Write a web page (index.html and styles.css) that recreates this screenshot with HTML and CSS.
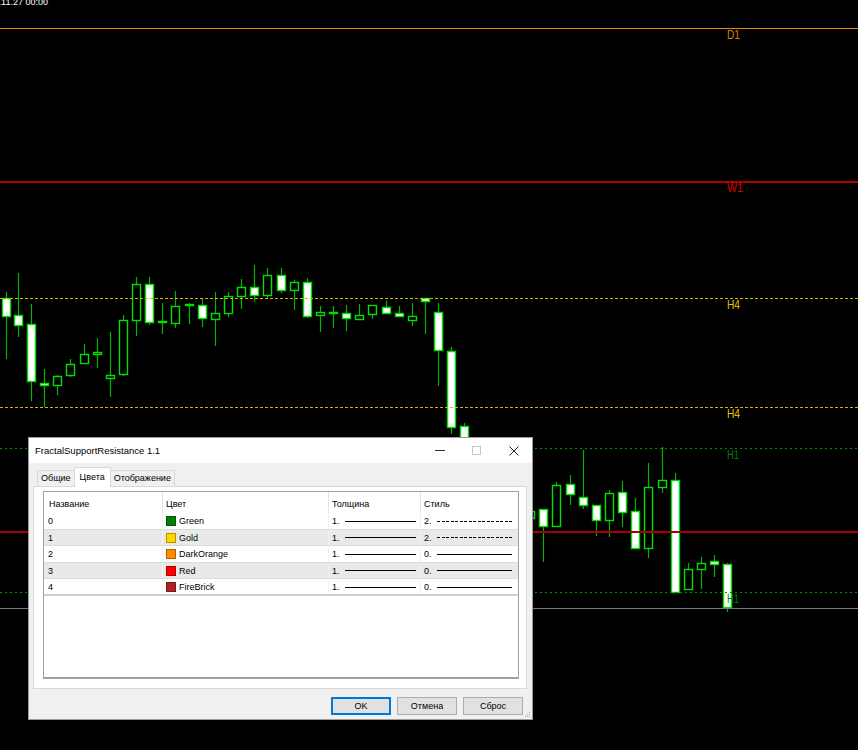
FILE: index.html
```html
<!DOCTYPE html>
<html>
<head>
<title>FractalSupportResistance</title>
<link rel="stylesheet" href="styles.css">
</head>
<body>

  <div class="screen">
    <svg class="chart" id="chart" width="858" height="750">
      <text class="date" x="48" y="5" text-anchor="end">2024.11.27 00:00</text>
      <g id="candles"></g>
      <line class="lvl d1" x1="0" y1="28.5" x2="858" y2="28.5"/>
      <line class="lvl w1" x1="0" y1="181.5" x2="858" y2="181.5"/>
      <line class="lvl h4" x1="0" y1="298.5" x2="858" y2="298.5"/>
      <line class="lvl h4" x1="0" y1="407.5" x2="858" y2="407.5"/>
      <line class="lvl h1" x1="0" y1="448.5" x2="858" y2="448.5"/>
      <line class="lvl mn" x1="0" y1="531.5" x2="858" y2="531.5"/>
      <line class="lvl h1" x1="0" y1="592.5" x2="858" y2="592.5"/>
      <line class="lvl bid" x1="0" y1="608.5" x2="858" y2="608.5"/>
      <text class="lbl d1" x="727" y="39" textLength="13" lengthAdjust="spacingAndGlyphs">D1</text>
      <text class="lbl w1" x="727" y="192" textLength="16" lengthAdjust="spacingAndGlyphs">W1</text>
      <text class="lbl h4" x="727" y="309" textLength="13" lengthAdjust="spacingAndGlyphs">H4</text>
      <text class="lbl h4" x="727" y="418" textLength="13" lengthAdjust="spacingAndGlyphs">H4</text>
      <text class="lbl h1" x="727" y="459" textLength="12" lengthAdjust="spacingAndGlyphs">H1</text>
      <text class="lbl h1" x="727" y="603" textLength="12" lengthAdjust="spacingAndGlyphs">H1</text>
    </svg>

    <div class="dialog">
      <div class="titlebar">
        <span class="title">FractalSupportResistance 1.1</span>
        <span class="cap-btn">
          <svg width="10" height="1"><rect width="10" height="1" fill="#333"/></svg>
        </span>
        <span class="cap-btn">
          <svg width="9" height="9"><rect x="0.5" y="0.5" width="8" height="8" fill="none" stroke="#c6c6c6"/></svg>
        </span>
        <span class="cap-btn">
          <svg width="10" height="10"><path d="M0.5 0.5L9.5 9.5M9.5 0.5L0.5 9.5" stroke="#222" fill="none"/></svg>
        </span>
      </div>

      <div class="dialog-body">
        <div class="tabs">
          <span class="tab">Общие</span>
          <span class="tab active">Цвета</span>
          <span class="tab">Отображение</span>
        </div>

        <div class="tab-page">
          <div class="list">
            <div class="row head">
              <div class="cell">Название</div>
              <div class="cell">Цвет</div>
              <div class="cell">Толщина</div>
              <div class="cell">Стиль</div>
            </div>
            <div class="row">
              <div class="cell">0</div>
              <div class="cell"><span class="swatch" style="background: #008000;"></span>Green</div>
              <div class="cell">1.<span class="stroke"></span></div>
              <div class="cell">2.<span class="stroke dash"></span></div>
            </div>
            <div class="row alt">
              <div class="cell">1</div>
              <div class="cell"><span class="swatch" style="background: #ffd700;"></span>Gold</div>
              <div class="cell">1.<span class="stroke"></span></div>
              <div class="cell">2.<span class="stroke dash"></span></div>
            </div>
            <div class="row">
              <div class="cell">2</div>
              <div class="cell"><span class="swatch" style="background: #ff8c00;"></span>DarkOrange</div>
              <div class="cell">1.<span class="stroke"></span></div>
              <div class="cell">0.<span class="stroke"></span></div>
            </div>
            <div class="row alt">
              <div class="cell">3</div>
              <div class="cell"><span class="swatch" style="background: #ff0000;"></span>Red</div>
              <div class="cell">1.<span class="stroke"></span></div>
              <div class="cell">0.<span class="stroke"></span></div>
            </div>
            <div class="row last">
              <div class="cell">4</div>
              <div class="cell"><span class="swatch" style="background: #b22222;"></span>FireBrick</div>
              <div class="cell">1.<span class="stroke"></span></div>
              <div class="cell">0.<span class="stroke"></span></div>
            </div>
          </div>
        </div>

        <div class="buttons">
          <button class="btn default">OK</button>
          <button class="btn">Отмена</button>
          <button class="btn">Сброс</button>
        </div>

        <svg class="grip" width="7" height="7">
          <rect x="5" y="1" width="1" height="1"/>
          <rect x="3" y="3" width="1" height="1"/>
          <rect x="5" y="3" width="1" height="1"/>
          <rect x="1" y="5" width="1" height="1"/>
          <rect x="3" y="5" width="1" height="1"/>
          <rect x="5" y="5" width="1" height="1"/>
        </svg>
      </div>
    </div>
  </div>

  <script>
    // [left, wickTop, wickBottom, bodyTop, bodyBottom, kind]  w = white, h = hollow, d = doji
    const candles = [
      [2, 292, 359, 298, 317, 'w'],
      [14, 273, 337, 315, 326, 'w'],
      [27, 304, 401, 324, 382, 'w'],
      [40, 369, 407, 383, 386, 'w'],
      [53, 375, 395, 376, 386, 'h'],
      [66, 359, 377, 364, 376, 'h'],
      [80, 344, 364, 354, 364, 'h'],
      [93, 338, 368, 352, 355, 'h'],
      [106, 332, 397, 375, 379, 'h'],
      [119, 315, 376, 320, 375, 'h'],
      [132, 277, 336, 284, 321, 'h'],
      [145, 277, 325, 284, 323, 'w'],
      [158, 303, 334, 321, 323, 'd'],
      [171, 291, 328, 306, 324, 'h'],
      [185, 303, 324, 304, 306, 'd'],
      [198, 298, 327, 305, 319, 'w'],
      [211, 292, 346, 313, 320, 'h'],
      [224, 292, 317, 296, 314, 'h'],
      [237, 279, 309, 287, 297, 'h'],
      [250, 265, 302, 287, 296, 'w'],
      [263, 268, 298, 275, 296, 'h'],
      [277, 268, 293, 275, 291, 'w'],
      [290, 280, 310, 282, 291, 'h'],
      [303, 278, 318, 282, 317, 'w'],
      [316, 306, 332, 312, 316, 'h'],
      [329, 306, 328, 312, 314, 'd'],
      [342, 305, 331, 313, 319, 'w'],
      [355, 304, 320, 315, 320, 'h'],
      [368, 305, 319, 305, 315, 'h'],
      [382, 301, 314, 307, 314, 'w'],
      [395, 306, 317, 313, 317, 'w'],
      [408, 303, 326, 316, 321, 'h'],
      [421, 298, 334, 298, 302, 'w'],
      [434, 303, 386, 312, 351, 'w'],
      [447, 347, 434, 351, 428, 'w'],
      [460, 423, 445, 426, 445, 'w'],
      [526, 505, 525, 511, 519, 'h'],
      [539, 509, 562, 509, 527, 'w'],
      [552, 482, 527, 485, 527, 'h'],
      [566, 475, 505, 484, 495, 'w'],
      [579, 450, 509, 497, 506, 'w'],
      [592, 505, 536, 505, 521, 'w'],
      [605, 490, 537, 493, 521, 'h'],
      [618, 481, 527, 492, 513, 'w'],
      [631, 498, 549, 511, 549, 'w'],
      [644, 463, 558, 487, 549, 'h'],
      [658, 447, 493, 480, 488, 'h'],
      [671, 473, 593, 480, 593, 'w'],
      [684, 563, 590, 569, 590, 'h'],
      [697, 557, 589, 563, 570, 'h'],
      [710, 555, 577, 561, 565, 'w'],
      [723, 563, 612, 564, 608, 'w']
    ];

    const ns = 'http://www.w3.org/2000/svg';
    const group = document.getElementById('candles');

    candles.forEach(([left, wTop, wBot, bTop, bBot, kind]) => {
      const wick = document.createElementNS(ns, 'line');
      wick.setAttribute('x1', left + 4.5);
      wick.setAttribute('x2', left + 4.5);
      wick.setAttribute('y1', wTop);
      wick.setAttribute('y2', wBot);
      wick.setAttribute('class', 'wick');
      group.appendChild(wick);

      const body = document.createElementNS(ns, 'rect');
      body.setAttribute('x', left + 0.5);
      body.setAttribute('y', bTop + 0.5);
      body.setAttribute('width', 8);
      body.setAttribute('height', Math.max(bBot - bTop - 1, 1));
      body.setAttribute('class', 'body ' + kind);
      group.appendChild(body);
    });
  </script>

</body>
</html>
```

FILE: styles.css
```css
body {
  margin: 0;
  background: #000;
  font-family: "Liberation Sans", Arial, sans-serif;
}

.screen {
  position: relative;
  width: 858px;
  height: 750px;
  overflow: hidden;
  background: #000;
}

.chart {
  display: block;
}

/* chart */
.date {
  fill: #fff;
  font-size: 9px;
}

.wick {
  stroke: #00b400;
  stroke-width: 1.2;
}

.body {
  stroke: #00e000;
  stroke-width: 1.4;
}

.body.w {
  fill: #fff;
}

.body.h {
  fill: #000;
}

.body.d {
  fill: #00e000;
}

.lvl {
  stroke-width: 1;
  shape-rendering: crispEdges;
}

.lvl.d1 { stroke: #f08000; }
.lvl.w1 { stroke: #b00000; stroke-width: 2; }
.lvl.mn { stroke: #a80000; stroke-width: 2; }
.lvl.h4 { stroke: #d8b400; stroke-dasharray: 3 2; }
.lvl.h1 { stroke: #009000; stroke-dasharray: 2 3; }
.lvl.bid { stroke: #707a88; }

.lbl {
  font-size: 12.5px;
}

.lbl.d1 { fill: #d98000; }
.lbl.w1 { fill: #d80000; }
.lbl.h4 { fill: #e0c000; }
.lbl.h1 { fill: #008000; }

/* dialog */
.dialog {
  position: absolute;
  left: 28px;
  top: 437px;
  width: 503px;
  border: 1px solid #9b9b9b;
  background: #f0f0f0;
  font-size: 9px;
  color: #000;
}

.titlebar {
  display: flex;
  align-items: center;
  height: 25px;
  background: #fff;
}

.title {
  flex: 1;
  padding-left: 6px;
  font-size: 9.5px;
}

.cap-btn {
  width: 37px;
  height: 25px;
  display: flex;
  align-items: center;
  justify-content: center;
}

.dialog-body {
  position: relative;
  padding: 4px 5px 4px 4px;
}

.tabs {
  position: relative;
  z-index: 1;
  display: flex;
  align-items: flex-end;
  height: 19px;
  padding-left: 4px;
}

.tab {
  height: 15px;
  line-height: 15px;
  padding: 0 3px;
  border: 1px solid #d9d9d9;
  border-bottom: none;
  background: #f0f0f0;
  margin-right: -1px;
}

.tab.active {
  height: 19px;
  line-height: 18px;
  padding: 0 5px;
  background: #fff;
  margin-bottom: -1px;
}

.tab-page {
  box-sizing: border-box;
  height: 203px;
  padding: 4px 7px 0 9px;
  background: #fff;
  border: 1px solid #d9d9d9;
}

.list {
  box-sizing: border-box;
  height: 188px;
  border: 1px solid #a0a0a0;
  border-bottom-width: 2px;
  background: #fff;
}

.row {
  box-sizing: border-box;
  display: grid;
  grid-template-columns: 118px 166px 92px 98px;
  height: 16.5px;
  border-bottom: 1px solid #dcdcdc;
}

.row.alt {
  background: #e9e9e9;
}

.row.last {
  border-bottom: 2px solid #cfcfcf;
  height: 17px;
}

.row.head {
  height: 21px;
  border-bottom: none;
}

.cell {
  display: flex;
  align-items: center;
  padding-left: 4px;
  padding-top: 1px;
  white-space: nowrap;
}

.cell + .cell {
  border-left: 1px solid #f2f2f2;
  padding-left: 3px;
}

.head .cell {
  padding-top: 2px;
}

.head .cell:first-child {
  padding-left: 5px;
}

.head .cell + .cell {
  border-left-color: #e5e5e5;
}

.swatch {
  box-sizing: border-box;
  width: 10px;
  height: 10px;
  margin-right: 3px;
  border: 1px solid rgba(0, 0, 0, 0.3);
}

.stroke {
  width: 71px;
  height: 1px;
  margin-left: 5px;
  background: #000;
}

.stroke.dash {
  background: repeating-linear-gradient(to right, #000 0 3px, transparent 3px 4.5px);
}

.cell:last-child .stroke {
  width: 75px;
}

.buttons {
  display: flex;
  justify-content: flex-end;
  gap: 6px;
  margin-top: 8px;
  padding-right: 4px;
}

.btn {
  box-sizing: border-box;
  width: 60px;
  height: 18px;
  padding: 0;
  border: 1px solid #adadad;
  background: #e1e1e1;
  font-family: "Liberation Sans", Arial, sans-serif;
  font-size: 9px;
  color: #000;
}

.btn.default {
  border-color: #0078d7;
  box-shadow: inset 0 0 0 1px #0078d7;
}

.grip {
  position: absolute;
  right: 1px;
  bottom: 1px;
  fill: #a8a8a8;
}
```
